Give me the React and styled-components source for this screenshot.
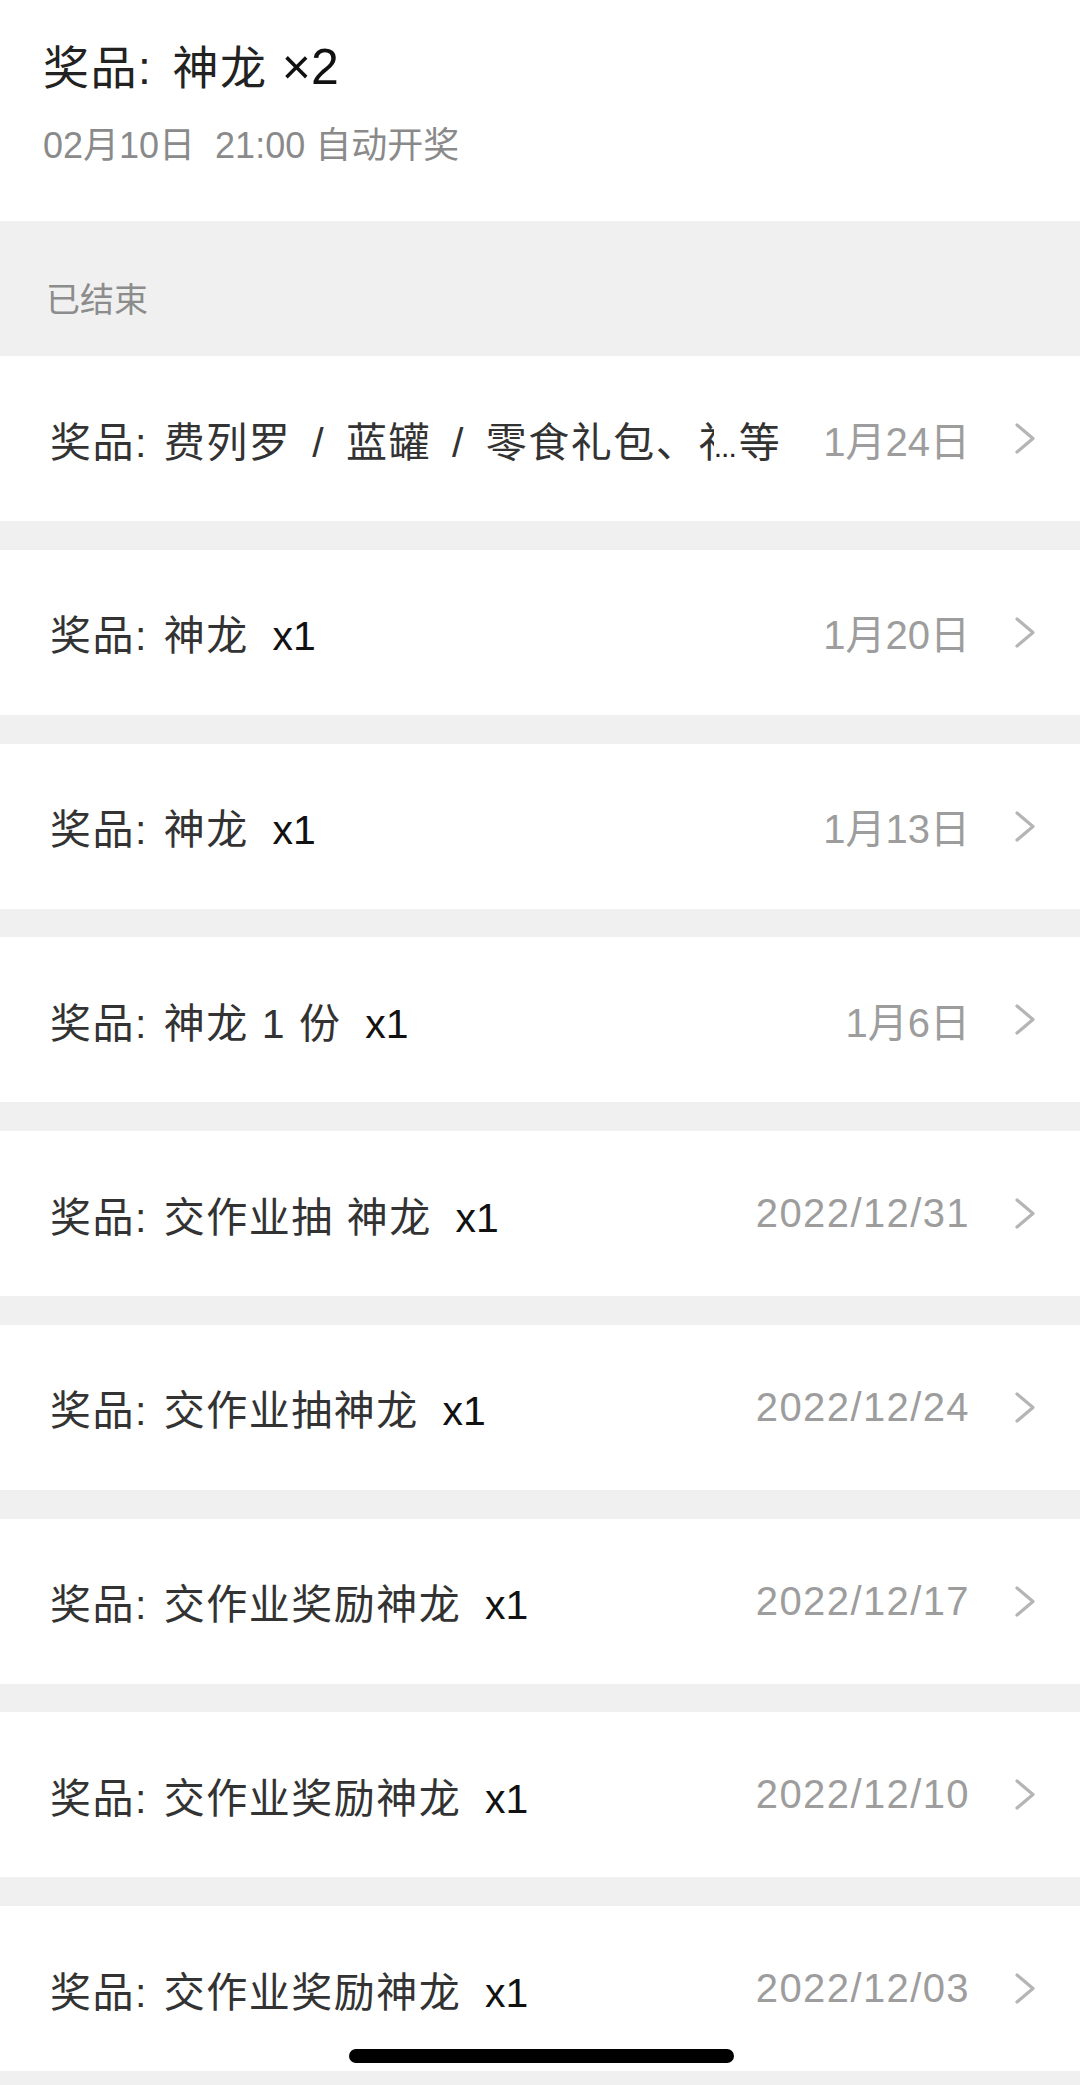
import styled, { createGlobalStyle } from 'styled-components';

const GlobalStyle = createGlobalStyle`
  html, body {
    margin: 0;
    padding: 0;
    background: #f0f0f0;
  }
  body {
    font-family: 'Liberation Sans', 'Noto Sans CJK SC', sans-serif;
    -webkit-font-smoothing: antialiased;
  }
`;

const Page = styled.div`
  width: 1080px;
  min-height: 2085px;
  background: #f0f0f0;
`;

const Header = styled.header`
  background: #fff;
  padding: 37px 43px 50px;
`;

const Title = styled.h1`
  margin: 0;
  font-size: 46px;
  line-height: 60px;
  font-weight: 400;
  color: #222;
  letter-spacing: 1.5px;
  white-space: pre;
`;

const Colon = styled.span`
  margin-right: ${({ space }) => space}px;
`;

const Times = styled.span`
  color: #111;
  font-size: 50px;
  letter-spacing: 0;
`;

const Subtitle = styled.p`
  margin: 23px 0 0;
  font-size: 36px;
  line-height: 50px;
  color: #8a8a8a;
  white-space: pre;
`;

const SectionLabel = styled.div`
  padding: 55px 46px 32px;
  font-size: 34px;
  line-height: 48px;
  color: #8c8c8c;
`;

const List = styled.ul`
  list-style: none;
  margin: 0;
  padding: 0;
  display: flex;
  flex-direction: column;
  gap: 28.75px;
`;

const Row = styled.li`
  height: 165px;
  background: #fff;
  display: flex;
  align-items: center;
  padding: 0 44px 0 50px;
  gap: 42px;
`;

const Name = styled.div`
  flex: 1;
  min-width: 0;
  display: flex;
  white-space: pre;
  font-size: 41px;
  letter-spacing: 1.5px;
  color: #333;
`;

const Clip = styled.span`
  overflow: hidden;
  min-width: 0;
`;

const Sep = styled.span`
  margin: 0 8px;
`;

const More = styled.span`
  flex-shrink: 0;
`;

const Dots = styled.span`
  font-size: 30px;
  letter-spacing: -1px;
  margin-right: 3px;
  color: #222;
`;

const Count = styled.span`
  color: #111;
  letter-spacing: 0;
  margin-left: -2px;
`;

const Date = styled.span`
  font-size: 40px;
  letter-spacing: ${({ wide }) => (wide ? '1.4px' : '0')};
  color: #9d9d9d;
  white-space: nowrap;
`;

const Chevron = styled.svg`
  width: 21px;
  height: 31px;
  margin-left: 3px;
  flex-shrink: 0;
`;

const HomeBar = styled.div`
  position: fixed;
  left: 349px;
  top: 2049px;
  width: 385px;
  height: 14px;
  border-radius: 7px;
  background: #000;
`;

const rows = [
  { name: ['费列罗', '蓝罐', '零食礼包、礼品'], date: '1月24日' },
  { name: '神龙', count: 'x1', date: '1月20日' },
  { name: '神龙', count: 'x1', date: '1月13日' },
  { name: '神龙 1 份', count: 'x1', date: '1月6日' },
  { name: '交作业抽 神龙', count: 'x1', date: '2022/12/31' },
  { name: '交作业抽神龙', count: 'x1', date: '2022/12/24' },
  { name: '交作业奖励神龙', count: 'x1', date: '2022/12/17' },
  { name: '交作业奖励神龙', count: 'x1', date: '2022/12/10' },
  { name: '交作业奖励神龙', count: 'x1', date: '2022/12/03' },
];

const RowName = ({ row }) => {
  if (Array.isArray(row.name)) {
    return (
      <Name>
        <Clip>
          奖品<Colon space={3}>:</Colon> {row.name[0]}
          <Sep> / </Sep>
          {row.name[1]}
          <Sep> / </Sep>
          {row.name[2]}
        </Clip>
        <More>
          <Dots>...</Dots>等
        </More>
      </Name>
    );
  }
  return (
    <Name>
      <span>
        奖品<Colon space={3}>:</Colon> {row.name}  <Count>{row.count}</Count>
      </span>
    </Name>
  );
};

const App = () => (
  <Page>
    <GlobalStyle />
    <Header>
      <Title>
        奖品<Colon space={6}>:</Colon> 神龙 <Times>×2</Times>
      </Title>
      <Subtitle>02月10日  21:00 自动开奖</Subtitle>
    </Header>
    <SectionLabel>已结束</SectionLabel>
    <List>
      {rows.map((row, index) => (
        <Row key={index}>
          <RowName row={row} />
          <Date wide={row.date.includes('/')}>{row.date}</Date>
          <Chevron viewBox='0 0 21 31'>
            <polyline
              points='2,2 18,15.5 2,29'
              fill='none'
              stroke='#b5b5b5'
              strokeWidth='3.2'
              strokeLinecap='round'
              strokeLinejoin='round'
            />
          </Chevron>
        </Row>
      ))}
    </List>
    <HomeBar />
  </Page>
);

export default App;
